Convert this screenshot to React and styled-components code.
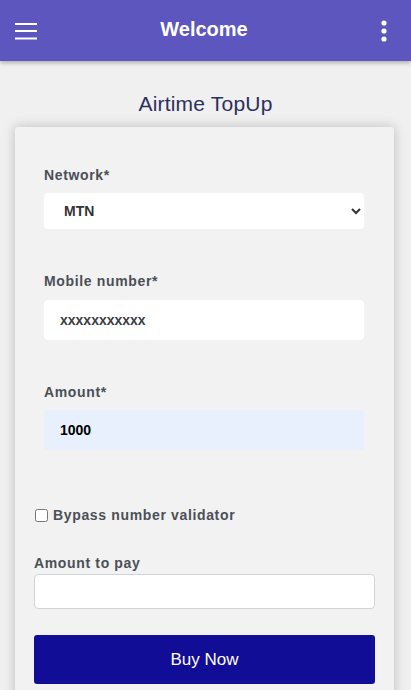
import React from "react";
import styled, { createGlobalStyle } from "styled-components";

const GlobalStyle = createGlobalStyle`
  html, body { margin: 0; padding: 0; }
  body {
    background: #f0f0f0;
    font-family: "Liberation Sans", Arial, sans-serif;
    overflow: hidden;
  }
  * { box-sizing: border-box; }
`;

const Page = styled.div`
  min-height: 690px;
  background: #f0f0f0;
`;

const Header = styled.header`
  position: relative;
  z-index: 2;
  height: 61px;
  background: #5c56be;
  box-shadow: 0 2px 4px rgba(0, 0, 0, 0.28);
  display: grid;
  grid-template-columns: 1fr auto 1fr;
  align-items: center;
  padding: 0 15px;
`;

const IconButton = styled.button`
  border: none;
  background: transparent;
  padding: ${(p) => (p.$end ? "0 9px 0 0" : "0")};
  display: flex;
  align-items: center;
  justify-self: ${(p) => (p.$end ? "end" : "start")};
  cursor: pointer;
`;

const HeaderTitle = styled.h1`
  margin: 0 3px 2px 0;
  color: #ffffff;
  font-size: 20px;
  font-weight: 700;
  font-family: "Liberation Sans", Arial, sans-serif;
`;

const PageTitle = styled.h2`
  margin: 31px 0 11px;
  text-align: center;
  font-size: 21px;
  line-height: 24px;
  font-weight: 400;
  letter-spacing: 0.2px;
  color: #2d2f5e;
`;

const Card = styled.form`
  margin: 0 17px 0 15px;
  background: #f2f2f2;
  border-radius: 3px;
  box-shadow: 0 0 12px rgba(0, 0, 0, 0.22);
  padding: 40px 19px 20px;
  min-height: 600px;
`;

const Group = styled.div`
  padding: 0 11px 0 10px;
  display: flex;
  flex-direction: column;
  gap: 44px;
`;

const Field = styled.div`
  display: flex;
  flex-direction: column;
`;

const Label = styled.label`
  display: block;
  font-size: 14px;
  line-height: 16px;
  font-weight: 700;
  letter-spacing: 0.65px;
  color: #4b4f56;
  margin-bottom: ${(p) => p.$gap || 10}px;
`;

const Select = styled.select`
  height: 36px;
  border: none;
  border-radius: 4px;
  background: #ffffff;
  padding: 0 4px 0 16px;
  font-family: "Liberation Sans", Arial, sans-serif;
  font-size: 14px;
  font-weight: 700;
  color: #333;
  outline: none;
`;

const Input = styled.input`
  height: ${(p) => p.$h || 40}px;
  border: ${(p) => (p.$bordered ? "1px solid #cfd4da" : "none")};
  border-radius: 4px;
  background: ${(p) => p.$bg || "#ffffff"};
  padding: 0 16px;
  font-family: "Liberation Sans", Arial, sans-serif;
  font-size: 14px;
  font-weight: 700;
  color: ${(p) => p.$color || "#3a3d42"};
  outline: none;
`;

const CheckRow = styled.label`
  display: flex;
  align-items: center;
  gap: 5px;
  margin: 57px 0 32px 1px;
  font-size: 14px;
  line-height: 16px;
  font-weight: 700;
  letter-spacing: 0.65px;
  color: #4b4f56;
`;

const Checkbox = styled.input`
  margin: 0;
  width: 13px;
  height: 13px;
`;

const BuyButton = styled.button`
  width: 100%;
  height: 49px;
  margin-top: 26px;
  border: none;
  border-radius: 3px;
  background: #120d96;
  color: #ffffff;
  font-family: "Liberation Sans", Arial, sans-serif;
  font-size: 17px;
  font-weight: 400;
  cursor: pointer;
`;

const Menu = () => (
  <svg width="22" height="18" viewBox="0 0 22 18">
    <g stroke="#fff" strokeWidth="2">
      <line x1="0" y1="2" x2="22" y2="2" />
      <line x1="0" y1="9" x2="22" y2="9" />
      <line x1="0" y1="16.5" x2="22" y2="16.5" />
    </g>
  </svg>
);

const Kebab = () => (
  <svg width="6" height="22" viewBox="0 0 6 22">
    <g fill="#fff">
      <circle cx="3" cy="3" r="2.6" />
      <circle cx="3" cy="11" r="2.6" />
      <circle cx="3" cy="19" r="2.6" />
    </g>
  </svg>
);

export default function App() {
  return (
    <Page>
      <GlobalStyle />
      <Header>
        <IconButton aria-label="menu">
          <Menu />
        </IconButton>
        <HeaderTitle>Welcome</HeaderTitle>
        <IconButton $end aria-label="more">
          <Kebab />
        </IconButton>
      </Header>
      <PageTitle>Airtime TopUp</PageTitle>
      <Card onSubmit={(e) => e.preventDefault()}>
        <Group>
          <Field>
            <Label>Network*</Label>
            <Select defaultValue="MTN">
              <option>MTN</option>
              <option>Airtel</option>
              <option>Glo</option>
              <option>9mobile</option>
            </Select>
          </Field>
          <Field>
            <Label $gap={11}>Mobile number*</Label>
            <Input defaultValue="xxxxxxxxxxx" />
          </Field>
          <Field>
            <Label>Amount*</Label>
            <Input defaultValue="1000" $bg="#e8f0fe" $color="#000" />
          </Field>
        </Group>
        <CheckRow>
          <Checkbox type="checkbox" />
          Bypass number validator
        </CheckRow>
        <Field>
          <Label $gap={3}>Amount to pay</Label>
          <Input $h={35} $bordered />
        </Field>
        <BuyButton type="submit">Buy Now</BuyButton>
      </Card>
    </Page>
  );
}
